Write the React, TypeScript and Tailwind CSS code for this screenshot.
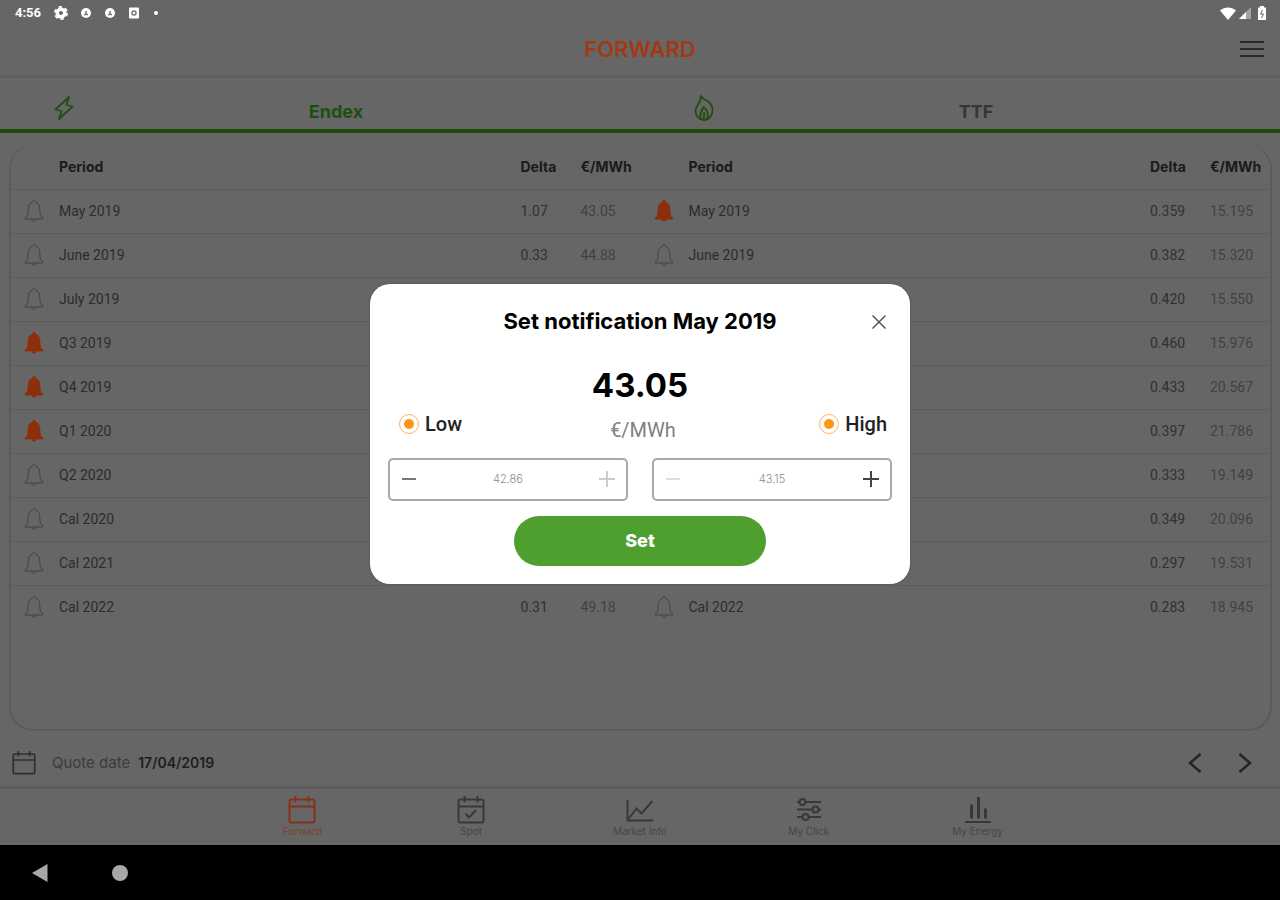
import { useState } from "react";
import type { ReactNode } from "react";

type Quote = {
  period: string;
  delta: string;
  price: string;
  alert?: boolean;
};

const endexQuotes: Quote[] = [
  { period: "May 2019", delta: "1.07", price: "43.05" },
  { period: "June 2019", delta: "0.33", price: "44.88" },
  { period: "July 2019", delta: "", price: "" },
  { period: "Q3 2019", delta: "", price: "", alert: true },
  { period: "Q4 2019", delta: "", price: "", alert: true },
  { period: "Q1 2020", delta: "", price: "", alert: true },
  { period: "Q2 2020", delta: "", price: "" },
  { period: "Cal 2020", delta: "", price: "" },
  { period: "Cal 2021", delta: "", price: "" },
  { period: "Cal 2022", delta: "0.31", price: "49.18" }
];

const ttfQuotes: Quote[] = [
  { period: "May 2019", delta: "0.359", price: "15.195", alert: true },
  { period: "June 2019", delta: "0.382", price: "15.320" },
  { period: "", delta: "0.420", price: "15.550" },
  { period: "", delta: "0.460", price: "15.976" },
  { period: "", delta: "0.433", price: "20.567" },
  { period: "", delta: "0.397", price: "21.786" },
  { period: "", delta: "0.333", price: "19.149" },
  { period: "", delta: "0.349", price: "20.096" },
  { period: "", delta: "0.297", price: "19.531" },
  { period: "Cal 2022", delta: "0.283", price: "18.945" }
];

function BellIcon({ filled }: { filled?: boolean }) {
  return (
    <svg
      viewBox="0 0 20 24"
      className={filled ? "h-6 w-5 fill-[#8c2f0a] stroke-[#8c2f0a]" : "h-6 w-5 fill-none stroke-[#424242]"}
      strokeLinejoin="round"
      aria-hidden="true"
    >
      <path d="M8.800 3c0-2.300 2.400-2.300 2.400 0 3.200 1 4.500 3.600 4.600 6.600.1 4 .2 6.400 1.200 7.900l1.800 1.200c.6 1-.1 1.300-.8 1.300H2c-.7 0-1.400-.3-.8-1.300L3 17.500c1-1.500 1.100-3.900 1.200-7.900C4.300 6.600 5.600 4 8.800 3z" />
      <path d="M8 20.200c.3 2.600 3.700 2.600 4 0" />
    </svg>
  );
}

function CalendarIcon({ checked, className }: { checked?: boolean; className: string }) {
  return (
    <svg viewBox="0 0 28 28" className={className} fill="none" stroke="currentColor" strokeWidth="2" aria-hidden="true">
      <rect x="1.500" y="3.500" width="25" height="23" rx="2" />
      <path d="M1.500 10.500h25M7.500 0v6.500M20.500 0v6.500" />
      {checked && <path d="M8.500 17.500l3.500 4 7-7.500" />}
    </svg>
  );
}

const tabs: { label: string; icon: ReactNode; active?: boolean }[] = [
  { label: "Forward", icon: <CalendarIcon className="size-7" />, active: true },
  { label: "Spot", icon: <CalendarIcon className="size-7" checked /> },
  {
    label: "Market Info",
    icon: (
      <svg viewBox="0 0 28 28" className="size-7" fill="none" stroke="currentColor" strokeWidth="2" aria-hidden="true">
        <path d="M1.500 4v20.500H27M2 23.500l8.500-11 5 5L26.500 5" />
      </svg>
    )
  },
  {
    label: "My Click",
    icon: (
      <svg viewBox="0 0 28 28" className="size-7" fill="none" stroke="currentColor" strokeWidth="2" aria-hidden="true">
        <path d="M2 6h2.500M10.500 6H26M2 13.500h15.500M23.500 13.500H26M2 21h5.500M13.500 21H26" />
        <circle cx="7.500" cy="6" r="3" />
        <circle cx="20.500" cy="13.500" r="3" />
        <circle cx="10.500" cy="21" r="3" />
      </svg>
    )
  },
  {
    label: "My Energy",
    icon: (
      <svg viewBox="0 0 28 28" className="size-7" fill="none" stroke="currentColor" strokeWidth="3" aria-hidden="true">
        <path d="M7.500 8.500v14M14.500 1v21.500M21.500 12.500v10" />
        <path d="M1 26h26" strokeWidth="2" />
      </svg>
    )
  }
];

function StatusBar() {
  return (
    <div className="flex h-[26px] items-center justify-between pr-3 pl-[15px] text-white">
      <div className="flex items-center gap-3">
        <span className="w-[27px] font-[Roboto] text-[13px] leading-4 font-bold">4:56</span>
        <svg viewBox="0 0 24 24" className="size-[14px]" fill="none" stroke="currentColor" aria-hidden="true">
          <circle cx="12" cy="12" r="6.500" strokeWidth="6" />
          <circle cx="12" cy="12" r="10.500" strokeWidth="3" strokeDasharray="6 5" />
        </svg>
        {[0, 1].map((n) => (
          <svg key={n} viewBox="0 0 12 12" className="size-3" aria-hidden="true">
            <circle cx="6" cy="6" r="5" fill="currentColor" />
            <path d="M4 7.500h4M6 4v4" stroke="#777" strokeWidth="1.500" />
          </svg>
        ))}
        <svg viewBox="0 0 12 12" className="size-3" aria-hidden="true">
          <rect x="1" y="0.500" width="10" height="11" rx="1" fill="currentColor" />
          <circle cx="6" cy="6" r="2" fill="none" stroke="#777" strokeWidth="1.500" />
        </svg>
        <span className="ml-[2px] size-1 rounded-full bg-white" />
      </div>
      <div className="flex items-center gap-[3px]">
        <svg viewBox="0 0 16 13" className="h-[13px] w-4" fill="currentColor" aria-hidden="true">
          <path d="M0 3.500C4.500-.4 11.500-.4 16 3.500L8 13z" />
        </svg>
        <svg viewBox="0 0 12 12" className="size-3" fill="currentColor" aria-hidden="true">
          <path d="M12 0v12H0z" opacity="0.400" />
          <path d="M7 5v7H0z" />
        </svg>
        <svg viewBox="0 0 12 14" className="ml-[2px] h-[14px] w-3" aria-hidden="true">
          <path d="M4 0h4v1.500h2V14H2V1.500h2z" fill="currentColor" />
          <path d="M6.500 4L4.500 8h3l-2 4" fill="none" stroke="#666" />
        </svg>
      </div>
    </div>
  );
}

function QuoteTable({ quotes, label }: { quotes: Quote[]; label: string }) {
  return (
    <table className="w-1/2 table-fixed border-collapse self-start text-left" aria-label={label}>
      <thead>
        <tr className="h-11 font-[Inter] text-sm text-[#1a1a1a]">
          <th className="w-12" />
          <th className="font-bold">Period</th>
          <th className="w-[60px] font-bold">Delta</th>
          <th className="w-[60px] font-bold">€/MWh</th>
        </tr>
      </thead>
      <tbody className="font-[Roboto] text-sm">
        {quotes.map((quote, index) => (
          <tr key={index} className="h-11 border-t border-[#5d5d5d]">
            <td className="pl-[13px]">
              {quote.period && (
                <button type="button" className="block" aria-label={`Set notification ${quote.period}`}>
                  <BellIcon filled={quote.alert} />
                </button>
              )}
            </td>
            <td className="text-[#2c2c2c]">{quote.period}</td>
            <td className="text-[#303030]">{quote.delta}</td>
            <td className="text-[#424242]">{quote.price}</td>
          </tr>
        ))}
      </tbody>
    </table>
  );
}

function Stepper({
  label,
  value,
  minusClass,
  plusClass
}: {
  label: string;
  value: string;
  minusClass: string;
  plusClass: string;
}) {
  return (
    <div className="flex h-[43px] min-w-0 flex-1 items-center rounded-[5px] border-2 border-[#a8a8a8] px-[11px]">
      <button type="button" className={minusClass} aria-label={`Decrease ${label}`}>
        <svg viewBox="0 0 16 16" className="size-4" stroke="currentColor" strokeWidth="2" aria-hidden="true">
          <path d="M1 8h14" />
        </svg>
      </button>
      <input
        className="w-full min-w-0 bg-transparent text-center font-[Inter] text-[11px] font-light text-[#8a8a8a] outline-none"
        aria-label={`${label} price`}
        defaultValue={value}
      />
      <button type="button" className={plusClass} aria-label={`Increase ${label}`}>
        <svg viewBox="0 0 16 16" className="size-4" stroke="currentColor" strokeWidth="2" aria-hidden="true">
          <path d="M0 8h16M8 0v16" />
        </svg>
      </button>
    </div>
  );
}

function LimitToggle({ label }: { label: string }) {
  const [on, setOn] = useState(true);

  return (
    <label className="flex h-[29px] items-center gap-[6px] font-[Roboto] text-xl font-medium text-[#222]">
      <input
        type="checkbox"
        checked={on}
        onChange={() => setOn(!on)}
        className="size-5 appearance-none rounded-full border border-[#ffb066] p-1 checked:bg-[#ff9510] checked:bg-clip-content"
      />
      {label}
    </label>
  );
}

function NotificationDialog() {
  return (
    <div
      role="dialog"
      aria-labelledby="dialog-title"
      className="w-[540px] rounded-[20px] bg-white px-[18px] pb-[18px] shadow-[0_0_2px_#444]"
    >
      <div className="grid h-[76px] grid-cols-[26px_1fr_26px] items-center">
        <h2 id="dialog-title" className="col-start-2 text-center font-[Inter] text-[22px] font-bold text-black">
          Set notification May 2019
        </h2>
        <button type="button" className="grid place-items-center text-[#555]" aria-label="Close">
          <svg viewBox="0 0 14 14" className="size-[14px]" stroke="currentColor" strokeWidth="1.500" aria-hidden="true">
            <path d="M.5.5l13 13M13.500.5l-13 13" />
          </svg>
        </button>
      </div>
      <p className="text-center font-[Inter] text-[33px] leading-[50px] font-bold text-black">43.05</p>
      <div className="grid h-12 grid-cols-3 items-start pr-[5px] pl-[11px]">
        <LimitToggle label="Low" />
        <p className="text-center font-[Roboto] text-xl leading-10 text-[#808080]">€/MWh</p>
        <div className="justify-self-end">
          <LimitToggle label="High" />
        </div>
      </div>
      <div className="flex gap-6">
        <Stepper label="Low" value="42.86" minusClass="text-[#777]" plusClass="text-[#ccc]" />
        <Stepper label="High" value="43.15" minusClass="text-[#ddd]" plusClass="text-[#444]" />
      </div>
      <button
        type="button"
        className="mx-auto mt-[15px] block h-[50px] w-[252px] rounded-full bg-[#4f9f2f] font-[Inter] text-lg font-extrabold text-white"
      >
        Set
      </button>
    </div>
  );
}

export default function App() {
  return (
    <div className="flex min-h-screen flex-col bg-black">
      <div className="relative flex flex-1 flex-col bg-[#666]">
        <StatusBar />
        <header className="grid h-[52px] grid-cols-[1fr_auto_1fr] items-center border-b-3 border-[#5f5f5f] px-4 pb-1">
          <h1 className="col-start-2 font-[Inter] text-[22px] leading-7 font-semibold text-[#a23914]">FORWARD</h1>
          <button type="button" className="justify-self-end text-[#292929]" aria-label="Menu">
            <svg viewBox="0 0 24 18" className="h-[18px] w-6" stroke="currentColor" strokeWidth="2" aria-hidden="true">
              <path d="M0 2h24M0 9h24M0 16h24" />
            </svg>
          </button>
        </header>

        <div className="grid h-[55px] grid-cols-2 border-b-4 border-[#1f4a10] font-[Inter] text-lg font-bold">
          <button type="button" className="grid grid-cols-[20%_65%_15%] items-center pt-4 text-[#1f4f10]">
            <svg
              viewBox="0 0 20 24"
              className="mb-2 h-6 w-5 justify-self-center"
              fill="none"
              stroke="currentColor"
              strokeWidth="1.800"
              strokeLinejoin="round"
              aria-hidden="true"
            >
              <path d="M15 1L1.500 13.500l6 1.500-2.500 8L18.500 10.500l-6-1.500z" />
            </svg>
            <span>Endex</span>
          </button>
          <button type="button" className="grid grid-cols-[20%_65%_15%] items-center pt-4 text-[#363636]">
            <svg
              viewBox="0 0 20 26"
              className="mb-2 h-[26px] w-5 justify-self-center text-[#1f4f10]"
              fill="none"
              stroke="currentColor"
              strokeWidth="1.800"
              strokeLinejoin="round"
              aria-hidden="true"
            >
              <path d="M7 1c1.500 3 4.500 4 7 5.500 3 2 4.500 5 4.500 9 0 5-3.500 9.500-8.500 9.500S1.500 21 1.500 15.500C1.500 11 7 8 7 1z" />
              <path d="M7.500 24c-3.500-4 .5-8 2-12 3.500 2.500 6 8 3 12M10 17v7" />
            </svg>
            <span>TTF</span>
          </button>
        </div>

        <main className="mt-3 mr-2 ml-[9px] flex flex-1 rounded-[24px] border-2 border-t-0 border-[#5b5b5b]">
          <QuoteTable quotes={endexQuotes} label="Endex" />
          <QuoteTable quotes={ttfQuotes} label="TTF" />
        </main>

        <div className="flex h-[58px] items-center border-b-3 border-[#5d5d5d] pt-2 pr-7 pl-3 font-[Inter] text-sm">
          <CalendarIcon className="size-6 text-[#303030]" />
          <span className="ml-4 text-[15px] text-[#3c3c3c]">Quote date</span>
          <time className="ml-2 font-semibold text-[#1d1d1d]">17/04/2019</time>
          <div className="ml-auto flex gap-9 text-[#242424]">
            <button type="button" aria-label="Previous date">
              <svg viewBox="0 0 14 20" className="h-5 w-[14px]" fill="none" stroke="currentColor" strokeWidth="2.500">
                <path d="M12.500 1L2 10l10.500 9" />
              </svg>
            </button>
            <button type="button" aria-label="Next date">
              <svg viewBox="0 0 14 20" className="h-5 w-[14px]" fill="none" stroke="currentColor" strokeWidth="2.500">
                <path d="M1.500 1L12 10 1.500 19" />
              </svg>
            </button>
          </div>
        </div>

        <nav className="mx-auto grid h-[56px] w-full max-w-[844px] grid-cols-5">
          {tabs.map((tab) => (
            <a
              key={tab.label}
              href="#"
              className={
                tab.active
                  ? "flex flex-col items-center pt-[7px] text-[#85321a]"
                  : "flex flex-col items-center pt-[7px] text-[#383838]"
              }
            >
              {tab.icon}
              <span className="font-[Inter] text-[10px] leading-[14px] opacity-70">{tab.label}</span>
            </a>
          ))}
        </nav>

        <div className="absolute inset-0 flex items-center justify-center pt-[22px]">
          <NotificationDialog />
        </div>
      </div>

      <div className="flex h-[55px] items-center gap-16 px-8 text-[#a8a8a8]">
        <button type="button" aria-label="Back">
          <svg viewBox="0 0 16 18" className="h-[18px] w-4" fill="currentColor">
            <path d="M15.500 0v18L0 9z" />
          </svg>
        </button>
        <button type="button" className="size-4 rounded-full bg-[#a8a8a8]" aria-label="Home" />
      </div>
    </div>
  );
}
